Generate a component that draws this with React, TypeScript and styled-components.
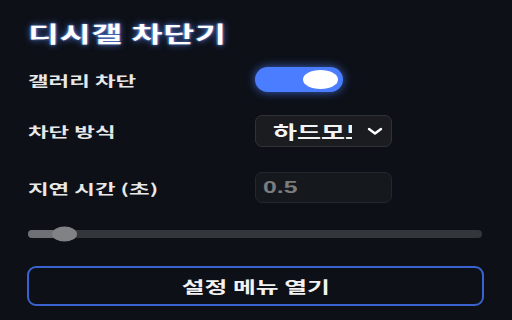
import * as React from 'react';
import styled, { createGlobalStyle } from 'styled-components';

const Global = createGlobalStyle`
  html, body {
    margin: 0;
    padding: 0;
    background: #0d1017;
  }
  body {
    font-family: "Noto Sans CJK KR", "Noto Sans", sans-serif;
    color: #ececec;
  }
`;

// the capture is stretched sideways, so text is widened to follow it
const Wide = styled.span<{ $x?: number; $origin?: string }>`
  display: inline-block;
  transform: scaleX(${(p) => p.$x ?? 1.5});
  transform-origin: ${(p) => p.$origin ?? 'left center'};
  white-space: nowrap;
`;

const Panel = styled.main`
  width: 512px;
  height: 320px;
  box-sizing: border-box;
  padding: 19px 28px 0;
  display: flex;
  flex-direction: column;
  overflow: hidden;
`;

const Title = styled.h1`
  margin: 0;
  font-size: 22px;
  line-height: 26px;
  font-weight: 700;
  letter-spacing: 0.5px;
  color: #ffffff;
  text-shadow: 0 0 6px rgba(90, 140, 255, 0.85), 0 0 2px rgba(120, 170, 255, 0.6),
    -1px 0 0 rgba(0, 200, 255, 0.35), 1px 0 0 rgba(255, 60, 90, 0.35);
`;

const Row = styled.div<{ $top: number }>`
  display: grid;
  grid-template-columns: 227px 137px;
  align-items: center;
  margin-top: ${(p) => p.$top}px;
`;

const Label = styled.span`
  font-size: 14px;
  font-weight: 700;
  color: #e8e8e8;
`;

const Toggle = styled.button<{ $on: boolean }>`
  width: 88px;
  height: 25px;
  padding: 0 5px;
  border: none;
  border-radius: 13px;
  background: ${(p) => (p.$on ? '#4a7dff' : '#333')};
  box-shadow: 0 0 10px rgba(74, 125, 255, 0.75);
  display: flex;
  align-items: center;
  justify-content: ${(p) => (p.$on ? 'flex-end' : 'flex-start')};
  cursor: pointer;
`;

const Knob = styled.span`
  width: 35px;
  height: 19px;
  border-radius: 50%;
  background: #ffffff;
`;

const Select = styled.div`
  height: 32px;
  box-sizing: border-box;
  border: 1px solid #2f3238;
  border-radius: 7px;
  background: #1a1c20;
  display: flex;
  align-items: center;
  padding: 0 7px 0 17px;
`;

const SelectText = styled.span`
  width: 79px;
  overflow: hidden;
  font-size: 18px;
  font-weight: 700;
  color: #f4f4f4;
`;

const Chevron = styled.svg`
  margin-left: auto;
  width: 18px;
  height: 16px;
`;

const NumberBox = styled.div`
  height: 31px;
  box-sizing: border-box;
  border: 1px solid #24272c;
  border-radius: 7px;
  background: #15181c;
  padding: 0 7px;
  display: flex;
  align-items: center;
  font-family: "Liberation Sans", sans-serif;
  font-size: 16px;
  font-weight: 700;
  color: #7a7c80;
`;

const Slider = styled.div`
  position: relative;
  margin-top: 27px;
  margin-right: 2px;
  height: 8px;
  border-radius: 4px;
  background: #33363b;
`;

const SliderFill = styled.div`
  height: 100%;
  border-radius: 4px;
  background: #6e7075;
`;

const Thumb = styled.span`
  position: absolute;
  top: 50%;
  width: 25px;
  height: 15px;
  margin-left: -12px;
  transform: translateY(-50%);
  border-radius: 50%;
  background: #808286;
`;

const OpenButton = styled.button`
  margin-top: 28px;
  margin-left: -1px;
  height: 40px;
  border: 2px solid #3b63cf;
  border-radius: 9px;
  background: transparent;
  font-family: inherit;
  font-size: 16px;
  font-weight: 700;
  color: #f2f2f2;
  cursor: pointer;
`;

export default function App() {
  const [on, setOn] = React.useState(true);
  const pct = 8;
  return (
    <>
      <Global />
      <Panel>
        <Title>
          <Wide $x={1.53}>디시갤 차단기</Wide>
        </Title>
        <Row $top={22}>
          <Label>
            <Wide $x={1.6}>갤러리 차단</Wide>
          </Label>
          <Toggle $on={on} onClick={() => setOn(!on)}>
            <Knob />
          </Toggle>
        </Row>
        <Row $top={23}>
          <Label>
            <Wide $x={1.6}>차단 방식</Wide>
          </Label>
          <Select>
            <SelectText>
              <Wide $x={1.45}>하드모드</Wide>
            </SelectText>
            <Chevron viewBox="0 0 18 16" fill="none">
              <path d="M3 6l6 4.5L15 6" stroke="#fff" strokeWidth="2.4" strokeLinecap="round" strokeLinejoin="round" />
            </Chevron>
          </Select>
        </Row>
        <Row $top={25}>
          <Label>
            <Wide $x={1.6}>지연 시간 (초)</Wide>
          </Label>
          <NumberBox>
            <Wide $x={1.55}>0.5</Wide>
          </NumberBox>
        </Row>
        <Slider>
          <SliderFill style={{ width: `${pct}%` }} />
          <Thumb style={{ left: `${pct}%` }} />
        </Slider>
        <OpenButton>
          <Wide $x={1.55} $origin="center">
            설정 메뉴 열기
          </Wide>
        </OpenButton>
      </Panel>
    </>
  );
}
